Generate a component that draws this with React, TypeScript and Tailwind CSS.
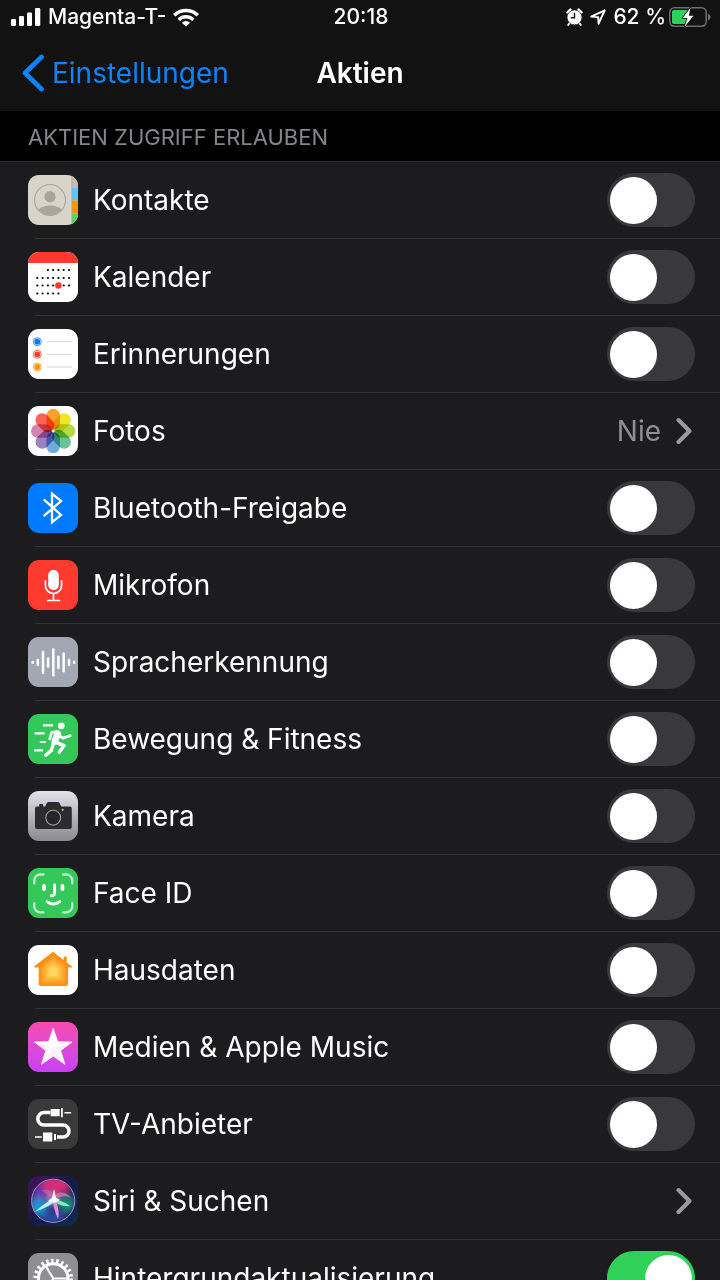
import type { ReactNode } from "react";

interface Setting {
  id: string;
  label: string;
  icon: ReactNode;
  kind: "switch" | "link";
  value?: string;
  on?: boolean;
}

interface TileProps {
  className: string;
  children: ReactNode;
}

function Tile({ className, children }: TileProps) {
  return (
    <svg
      viewBox="0 0 50 50"
      aria-hidden="true"
      className={`size-[50px] shrink-0 rounded-[11px] ${className}`}
    >
      {children}
    </svg>
  );
}

function ContactsIcon() {
  return (
    <Tile className="bg-[#d8d4ca]">
      <defs>
        <clipPath id="contact-head">
          <circle cx="22" cy="25" r="15" />
        </clipPath>
      </defs>
      <g fill="#aaa49c" clipPath="url(#contact-head)">
        <circle cx="22" cy="21.7" r="5.6" />
        <ellipse cx="22" cy="37.5" rx="12.5" ry="7" />
      </g>
      <circle cx="22" cy="25" r="15.5" fill="none" stroke="#aaa49c" strokeWidth="1.1" />
      <rect x="44" width="6" height="13" fill="#c2beb6" />
      <rect x="44" y="13" width="6" height="12.5" fill="#5ac8fa" />
      <rect x="44" y="25.5" width="6" height="13" fill="#ff9500" />
      <rect x="44" y="38.5" width="6" height="12" fill="#4cd964" />
      <rect x="43.5" width="0.8" height="50" fill="#a5a19a" />
    </Tile>
  );
}

const calendarColumns = [9.3, 14.6, 19.9, 25.1, 30.4, 35.7, 41];
const calendarRows = [
  { y: 18, from: 2, to: 6 },
  { y: 26, from: 0, to: 6 },
  { y: 33.5, from: 0, to: 6 },
  { y: 41.5, from: 0, to: 4 },
];

function CalendarIcon() {
  return (
    <Tile className="bg-white">
      <rect width="50" height="11" fill="#ff3b30" />
      {calendarRows.map((row) =>
        calendarColumns
          .slice(row.from, row.to + 1)
          .map((x) => <circle key={`${x}-${row.y}`} cx={x} cy={row.y} r="1.1" fill="#000" />),
      )}
      <circle cx="30.4" cy="33.5" r="3.3" fill="#ff3b30" />
    </Tile>
  );
}

function RemindersIcon() {
  const items = [
    { y: 12.7, color: "#007aff" },
    { y: 25.3, color: "#ff3b30" },
    { y: 38, color: "#ff9500" },
  ];
  return (
    <Tile className="bg-white">
      {items.map((item) => (
        <g key={item.y}>
          <circle cx="9.3" cy={item.y} r="4" fill="none" stroke={item.color} strokeWidth="0.8" />
          <circle cx="9.3" cy={item.y} r="2.9" fill={item.color} />
          <rect x="19" y={item.y - 0.5} width="25" height="1" fill="#d4d4d6" />
        </g>
      ))}
    </Tile>
  );
}

const petals = [
  "#fb9a1c",
  "#f2e10f",
  "#b4d637",
  "#5cbd8c",
  "#62a5de",
  "#9576bd",
  "#d179ad",
  "#f8564a",
];

function PhotosIcon() {
  return (
    <Tile className="bg-white">
      {petals.map((color, i) => (
        <rect
          key={color}
          x="18.4"
          y="2.8"
          width="13.6"
          height="21.2"
          rx="6.8"
          fill={color}
          opacity="0.92"
          transform={`rotate(${i * 45} 25.2 25)`}
          className="mix-blend-multiply"
        />
      ))}
      <circle cx="25.2" cy="25" r="1.3" fill="#fff" />
    </Tile>
  );
}

function BluetoothIcon() {
  return (
    <Tile className="bg-[#007aff]">
      <path
        d="M15.7 16.3 33 32 24 39.4V10.6L33 18 15.7 33.2"
        fill="none"
        stroke="#fff"
        strokeWidth="2.3"
      />
    </Tile>
  );
}

function MicrophoneIcon() {
  return (
    <Tile className="bg-[#ff3b30]">
      <rect x="20.2" y="9.8" width="10.6" height="20.2" rx="5.3" fill="#fff" />
      <path
        d="M17.4 20.8v4.6a8.1 8.1 0 0 0 16.2 0v-4.6M25.5 33.5v7M19.5 40.5h12"
        fill="none"
        stroke="#fff"
        strokeWidth="1.7"
        strokeLinecap="round"
      />
    </Tile>
  );
}

const waveBars = [
  [4.7, 0.4],
  [9.8, 2.4],
  [15, 10.4],
  [20.1, 4],
  [25.3, 12.8],
  [30.4, 5.6],
  [35.7, 8.8],
  [41, 2.4],
  [46.2, 0.4],
];

function SpeechIcon() {
  return (
    <Tile className="bg-[#a1a7b3]">
      {waveBars.map(([x, h]) => (
        <path
          key={x}
          d={`M${x} ${25.4 - h}V${25.4 + h}`}
          stroke="#fff"
          strokeWidth="2.5"
          strokeLinecap="round"
        />
      ))}
    </Tile>
  );
}

function FitnessIcon() {
  return (
    <Tile className="bg-[#34c759]">
      <circle cx="33.3" cy="11.8" r="3.4" fill="#fff" />
      <g fill="none" stroke="#fff" strokeLinecap="round" strokeLinejoin="round">
        <path d="M15.8 11.4h8.4M7.5 19.4h8.2M12.8 28h4.2M6.8 36.3h7.4" strokeWidth="2.2" />
        <path d="M21.8 24.8 23.6 18.4 29.5 17.6 32.6 22.6 34.8 24.2 42.2 21.6" strokeWidth="2.8" />
        <path d="M29.6 19.6 26.8 27.6" strokeWidth="6.6" />
        <path d="M28 28.4 36 31.6 31.2 38.2" strokeWidth="3.4" />
        <path d="M25.4 29.6 23.4 36.4 17.6 41.2" strokeWidth="3.4" />
      </g>
    </Tile>
  );
}

function CameraIcon() {
  return (
    <Tile className="bg-linear-to-b from-[#e4e2ea] to-[#8b8a91]">
      <path
        d="M9 15.4h2.2v-1.6q0-.8.8-.8h2.3q.8 0 .8.8v1.6h2l1.6-3.2q.6-1.2 1.8-1.2h9.3q1.2 0 1.8 1.2l1.6 3.2h8.6q2 0 2 2V36q0 2-2 2H9q-2 0-2-2V17.4q0-2 2-2Z"
        fill="#2c2c2e"
      />
      <circle cx="25.2" cy="26.7" r="7.4" fill="#252527" stroke="#9b9b9f" strokeWidth="1.1" />
      <circle cx="34.7" cy="18.8" r="1.1" fill="#f5b22b" />
    </Tile>
  );
}

function FaceIdIcon() {
  return (
    <Tile className="bg-[#34c759]">
      <g fill="none" stroke="#fff" strokeLinecap="round">
        <path
          d="M6.3 15.6v-3.1a6 6 0 0 1 6-6h3.2M35 6.500h3.200a6 6 0 0 1 6 6v3.100M44.200 35.200v3.200a6 6 0 0 1-6 6H35M15.500 44.400h-3.200a6 6 0 0 1-6-6v-3.200"
          strokeWidth="2.3"
          opacity="0.7"
        />
        <path d="M16 17.800v3.200M34.400 17.800v3.200" strokeWidth="3.800" />
        <path d="M26.600 17v8.200q0 2.600-3.400 2.500" strokeWidth="2.900" />
        <path d="M19 33.600q6.400 5 12.800 0" strokeWidth="2.800" />
      </g>
    </Tile>
  );
}

function HomeIcon() {
  return (
    <Tile className="bg-white">
      <path
        d="M25 6.8 35.6 15v-3q0-.6.6-.6h2q.6 0 .6.6v5.6l5.200 4q.5.800-.6.800H40V39q0 2-2 2H12.700q-2 0-2-2V22.400H6.600q-1.100 0-.6-.8Z"
        fill="#ff9013"
      />
      <path d="M25 11.500 37.200 21v15.500q0 1.700-1.700 1.700H15.100q-1.700 0-1.700-1.700V21Z" fill="#ffa429" />
      <path d="M25 15 34.200 22.200v11.500q0 1.700-1.700 1.700H17.900q-1.700 0-1.700-1.700V22.200Z" fill="#ffb53c" />
      <path d="M25 18 31.500 23.200v9.500H18.800v-9.500Z" fill="#ffc84c" />
      <path d="M25 20.500 29.200 23.800V31H21v-7.200Z" fill="#ffd95c" />
    </Tile>
  );
}

function MusicIcon() {
  return (
    <Tile className="bg-linear-to-b from-[#f64bb0] to-[#c93ff6]">
      <path
        d="M25.2 6.5 29.800 19.700 44 20 32.600 28.500 36.900 42.300 25.200 34.100 13.500 42.300 17.800 28.500 6.400 20 20.600 19.700Z"
        fill="#fff"
        stroke="#fff"
        strokeWidth="0.8"
        strokeLinejoin="round"
      />
      <path
        d="M25.200 26 36.900 42.300 25.200 34.100ZM25.200 26 44 20 32.600 28.500ZM25.200 26 17.800 28.500 6.400 20ZM25.200 26v8.100L13.500 42.300Z"
        fill="#fdf0fc"
      />
    </Tile>
  );
}

function TvProviderIcon() {
  return (
    <Tile className="bg-[#3a3a3b]">
      <path
        d="M22.5 13.6H16a6.200 6.200 0 0 0 0 12.400H35a6 6 0 0 1 0 12H29"
        fill="none"
        stroke="#fff"
        strokeWidth="3.5"
      />
      <g fill="#fff">
        <path d="M22.700 10h9v7.200h-9ZM33 9h1.800v9.200H33ZM36.500 13h6.700v1.400h-6.700Z" />
        <path d="M15 33.600h9.300v8.800H15ZM26 35h2v6h-2ZM7 37.300h6.800v1.400H7Z" />
      </g>
    </Tile>
  );
}

function SiriIcon() {
  return (
    <Tile className="bg-linear-to-br from-[#470b5e] via-[#151a48] to-[#0b2c50]">
      <defs>
        <clipPath id="siri-orb">
          <circle cx="25.2" cy="24.8" r="21.4" />
        </clipPath>
        <filter id="siri-soft" x="-50%" y="-50%" width="200%" height="200%">
          <feGaussianBlur stdDeviation="3.2" />
        </filter>
        <filter id="siri-glow" x="-50%" y="-50%" width="200%" height="200%">
          <feGaussianBlur stdDeviation="0.7" />
        </filter>
      </defs>
      <g clipPath="url(#siri-orb)">
        <rect width="50" height="50" fill="#27235f" />
        <g filter="url(#siri-soft)">
          <ellipse cx="27" cy="9" rx="16" ry="9" fill="#d92a78" />
          <ellipse cx="12" cy="18" rx="7" ry="8" fill="#6a3bb0" />
          <ellipse cx="10" cy="31" rx="9" ry="9" fill="#1698d8" />
          <ellipse cx="39" cy="28" rx="8" ry="9" fill="#128a78" />
          <ellipse cx="25" cy="41" rx="12" ry="6" fill="#2c4ba6" />
          <circle cx="25" cy="24" r="5" fill="#b6d7f8" />
        </g>
        <g filter="url(#siri-glow)">
          <path d="M25 24C19 20 17 15 14 15c4-4 13 0 11 9Z" fill="#d25fae" opacity="0.7" />
          <path d="M25 24c2-9 12-10 18-2-7-4-13 0-18 2Z" fill="#e57bb4" opacity="0.7" />
          <path d="M26 23C20 25 13 30 7 36c7-3 15-6 20-11Z" fill="#b5f5ff" />
          <path d="M24 23c7 1 13 3 18 7-7 1-12-2-17-5Z" fill="#7ff0c0" />
          <path d="M24 23c2 8 3 14 6 20 2-5 0-13-3-20Z" fill="#e98ae0" />
          <path d="M20 25 24 22 26 13 28 22 32 24 26 27Z" fill="#fff" />
        </g>
      </g>
      <circle cx="25.2" cy="24.8" r="21.6" fill="none" stroke="#b79cc9" strokeWidth="0.9" />
    </Tile>
  );
}

function GearIcon() {
  return (
    <Tile className="bg-[#8e8e93]">
      <g fill="none" stroke="#fff">
        <circle cx="25.2" cy="25.500" r="14.800" strokeWidth="3" />
        <circle cx="25.200" cy="25.500" r="17.800" strokeWidth="4" strokeDasharray="2.4 2.684" />
        <path
          d="M25.200 25.500 17.600 12.800M25.200 25.500H40M25.200 25.500 17.600 38.500"
          strokeWidth="2.2"
        />
      </g>
    </Tile>
  );
}

const settings: Setting[] = [
  { id: "kontakte", label: "Kontakte", icon: <ContactsIcon />, kind: "switch" },
  { id: "kalender", label: "Kalender", icon: <CalendarIcon />, kind: "switch" },
  { id: "erinnerungen", label: "Erinnerungen", icon: <RemindersIcon />, kind: "switch" },
  { id: "fotos", label: "Fotos", icon: <PhotosIcon />, kind: "link", value: "Nie" },
  { id: "bluetooth", label: "Bluetooth-Freigabe", icon: <BluetoothIcon />, kind: "switch" },
  { id: "mikrofon", label: "Mikrofon", icon: <MicrophoneIcon />, kind: "switch" },
  { id: "sprache", label: "Spracherkennung", icon: <SpeechIcon />, kind: "switch" },
  { id: "fitness", label: "Bewegung & Fitness", icon: <FitnessIcon />, kind: "switch" },
  { id: "kamera", label: "Kamera", icon: <CameraIcon />, kind: "switch" },
  { id: "faceid", label: "Face ID", icon: <FaceIdIcon />, kind: "switch" },
  { id: "hausdaten", label: "Hausdaten", icon: <HomeIcon />, kind: "switch" },
  { id: "medien", label: "Medien & Apple Music", icon: <MusicIcon />, kind: "switch" },
  { id: "tv", label: "TV-Anbieter", icon: <TvProviderIcon />, kind: "switch" },
  { id: "siri", label: "Siri & Suchen", icon: <SiriIcon />, kind: "link" },
  { id: "hintergrund", label: "Hintergrundaktualisierung", icon: <GearIcon />, kind: "switch", on: true },
];

function StatusBar() {
  return (
    <div className="grid h-[34px] grid-cols-[1fr_auto_1fr] items-center pr-[9px] pl-[11px] text-[21px] font-medium">
      <div className="flex items-center gap-[7px]">
        <svg viewBox="0 0 30 18" aria-hidden="true" className="h-[18px] w-[30px]" fill="#fff">
          <rect y="11" width="5" height="7" rx="1.3" />
          <rect x="8" y="8" width="5" height="10" rx="1.3" />
          <rect x="16" y="4.5" width="5" height="13.5" rx="1.3" />
          <rect x="24" width="5.3" height="18" rx="1.3" />
        </svg>
        <span>Magenta-T-</span>
        <svg viewBox="0 0 26 19" aria-hidden="true" className="h-[19px] w-[26px]">
          <g fill="none" stroke="#fff" strokeWidth="3.4">
            <path d="M1.2 7.3a17 17 0 0 1 23.6 0" />
            <path d="M5.7 11.7a10.5 10.5 0 0 1 14.6 0" />
          </g>
          <path d="M13 18.6 8.9 14.7a6 6 0 0 1 8.2 0Z" fill="#fff" />
        </svg>
      </div>
      <time>20:18</time>
      <div className="flex items-center justify-end gap-[7px]">
        <svg viewBox="0 0 17 18" aria-hidden="true" className="h-[18px] w-[17px]">
          <g stroke="#fff" strokeLinecap="round">
            <path d="M1.6 4.4 4.4 1.6M15.400 4.400 12.600 1.600" strokeWidth="2.6" />
            <path d="M3.600 15 2.200 17M13.400 15l1.400 2" strokeWidth="1.8" />
          </g>
          <circle cx="8.500" cy="9.400" r="7.400" fill="#fff" stroke="#121212" strokeWidth="0.600" />
          <path d="M8.500 4.800v5H4.800" fill="none" stroke="#121212" strokeWidth="1.400" />
        </svg>
        <svg viewBox="0 0 16 16" aria-hidden="true" className="size-4">
          <path
            d="M1.200 7.600 14.700 1.300 8.600 14.700 8.200 8.100Z"
            fill="none"
            stroke="#fff"
            strokeWidth="1.9"
            strokeLinejoin="round"
          />
        </svg>
        <span>62 %</span>
        <svg viewBox="0 0 42 20" aria-hidden="true" className="-ml-1 h-5 w-[42px]">
          <rect x=".8" y=".8" width="36.400" height="18.400" rx="4.600" fill="none" stroke="#6f6f72" strokeWidth="1.500" />
          <path d="M39 6.500q2.600 1.200 2.600 3.500T39 13.500Z" fill="#6f6f72" />
          <path d="M5 3h14v14H5q-2 0-2-2V5q0-2 2-2Z" fill="#30d158" />
          <path
            d="M21.500.5 13.800 11h4.600L15.800 19.500 24.500 8.700H19.800Z"
            fill="#fff"
            stroke="#121212"
            strokeWidth="1.600"
            strokeLinejoin="round"
            paintOrder="stroke"
          />
        </svg>
      </div>
    </div>
  );
}

function NavBar() {
  return (
    <nav className="grid h-[77px] grid-cols-[1fr_auto_1fr] items-center px-[22px] text-[28px]">
      <a href="#einstellungen" className="flex items-center gap-2 text-[#0a84ff]">
        <svg viewBox="0 0 22 38" aria-hidden="true" className="h-[38px] w-[22px]">
          <path
            d="M19.500 3 3 19 19.500 35"
            fill="none"
            stroke="currentColor"
            strokeWidth="4.600"
            strokeLinecap="round"
            strokeLinejoin="round"
          />
        </svg>
        Einstellungen
      </a>
      <h1 className="font-semibold">Aktien</h1>
    </nav>
  );
}

function Chevron() {
  return (
    <svg viewBox="0 0 16 28" aria-hidden="true" className="h-7 w-4">
      <path
        d="M2.500 3 13.500 14 2.500 25"
        fill="none"
        stroke="#9a9aa0"
        strokeWidth="4"
        strokeLinecap="round"
        strokeLinejoin="round"
      />
    </svg>
  );
}

function SettingRow({ setting }: { setting: Setting }) {
  if (setting.kind === "link") {
    return (
      <a href={`#${setting.id}`} className="flex h-[76px] items-center gap-[15px] pr-7 pl-7">
        {setting.icon}
        <span className="flex-1 truncate">{setting.label}</span>
        {setting.value && <span className="text-[#8e8e93]">{setting.value}</span>}
        <Chevron />
      </a>
    );
  }

  return (
    <label htmlFor={setting.id} className="flex h-[76px] items-center gap-[15px] pr-[25px] pl-7">
      {setting.icon}
      <span className="flex-1 whitespace-nowrap">{setting.label}</span>
      <input
        id={setting.id}
        type="checkbox"
        role="switch"
        defaultChecked={setting.on}
        className="flex h-[54px] w-[88px] shrink-0 appearance-none items-center rounded-full bg-[#39393d] px-[3px] before:size-[47px] before:rounded-full before:bg-white checked:justify-end checked:bg-[#30d158]"
      />
    </label>
  );
}

export default function App() {
  return (
    <div className="flex h-screen flex-col bg-[#1c1c1e] font-['Inter',sans-serif] text-white">
      <header className="shrink-0 bg-[#121212]">
        <StatusBar />
        <NavBar />
      </header>
      <main className="min-h-0 flex-1 overflow-y-auto text-[28px] [scrollbar-width:none]">
        <h2 className="flex h-[50px] items-center bg-black px-7 pt-0.5 text-[22px] text-[#85858a] uppercase">
          Aktien Zugriff erlauben
        </h2>
        <ul className="border-t border-[#2c2c2e]">
          {settings.map((setting) => (
            <li key={setting.id}>
              <SettingRow setting={setting} />
              <div className="ml-[35px] h-px bg-[#323235]" />
            </li>
          ))}
        </ul>
      </main>
    </div>
  );
}
